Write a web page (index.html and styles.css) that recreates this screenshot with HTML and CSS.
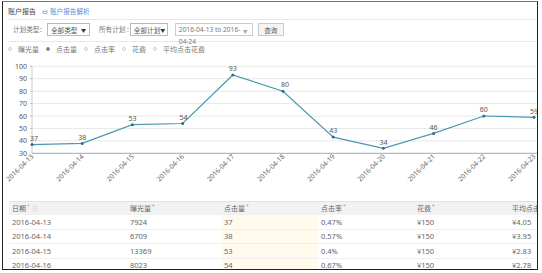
FILE: index.html
```html
<!DOCTYPE html>
<html lang="zh-CN">
<head>
    <meta charset="UTF-8">
    <title>账户报告</title>
    <link rel="stylesheet" href="styles.css">
</head>
<body>
    <div class="frame">
        <div class="title-bar">
            <span class="title">账户报告</span>
            <a class="help-link" href="#"><span class="help-icon">⇔</span>账户报告解析</a>
        </div>

        <div class="filters">
            <span class="filter-label label-type">计划类型：</span>
            <div class="select select-type">全部类型<span class="caret">▼</span></div>
            <span class="filter-label label-plan">所有计划 :</span>
            <div class="select select-plan">全部计划<span class="caret">▼</span></div>
            <div class="date-range">
                <span class="date-text">2016-04-13 to 2016-<br>04-24</span>
                <span class="caret light">▼</span>
            </div>
            <button class="query-btn">查询</button>
        </div>

        <div class="legend">
            <span class="legend-item"><i class="dot"></i>曝光量</span>
            <span class="legend-item"><i class="dot on"></i>点击量</span>
            <span class="legend-item"><i class="dot"></i>点击率</span>
            <span class="legend-item"><i class="dot"></i>花费</span>
            <span class="legend-item"><i class="dot"></i>平均点击花费</span>
        </div>

        <svg class="chart" width="535" height="140" viewBox="0 0 535 140">
            <g class="grid">
                <line x1="29" y1="10.3" x2="535" y2="10.3"/>
                <line x1="29" y1="22.7" x2="535" y2="22.7"/>
                <line x1="29" y1="35.2" x2="535" y2="35.2"/>
                <line x1="29" y1="47.6" x2="535" y2="47.6"/>
                <line x1="29" y1="60" x2="535" y2="60"/>
                <line x1="29" y1="72.4" x2="535" y2="72.4"/>
                <line x1="29" y1="84.9" x2="535" y2="84.9"/>
            </g>
            <line class="y-axis" x1="29" y1="10.3" x2="29" y2="97.3"/>
            <g class="ticks">
                <line x1="27" y1="10.3" x2="29" y2="10.3"/>
                <line x1="27" y1="22.7" x2="29" y2="22.7"/>
                <line x1="27" y1="35.2" x2="29" y2="35.2"/>
                <line x1="27" y1="47.6" x2="29" y2="47.6"/>
                <line x1="27" y1="60" x2="29" y2="60"/>
                <line x1="27" y1="72.4" x2="29" y2="72.4"/>
                <line x1="27" y1="84.9" x2="29" y2="84.9"/>
            </g>
            <line class="x-axis" x1="29" y1="97.3" x2="535" y2="97.3"/>

            <g class="y-labels">
                <text x="24" y="12.8">100</text>
                <text x="24" y="25.2">90</text>
                <text x="24" y="37.7">80</text>
                <text x="24" y="50.1">70</text>
                <text x="24" y="62.5">60</text>
                <text x="24" y="74.9">50</text>
                <text x="24" y="87.4">40</text>
                <text x="24" y="99.8">30</text>
            </g>

            <polyline class="series" points="29,88.6 79.2,87.4 129.4,68.7 179.6,67.5 229.8,19 280,35.2 330.2,81.1 380.4,92.3 430.6,77.4 480.8,60 531,61.3"/>
            <g class="points">
                <circle cx="29" cy="88.6" r="1.5"/>
                <circle cx="79.2" cy="87.4" r="1.5"/>
                <circle cx="129.4" cy="68.7" r="1.5"/>
                <circle cx="179.6" cy="67.5" r="1.5"/>
                <circle cx="229.8" cy="19" r="1.5"/>
                <circle cx="280" cy="35.2" r="1.5"/>
                <circle cx="330.2" cy="81.1" r="1.5"/>
                <circle cx="380.4" cy="92.3" r="1.5"/>
                <circle cx="430.6" cy="77.4" r="1.5"/>
                <circle cx="480.8" cy="60" r="1.5"/>
                <circle cx="531" cy="61.3" r="1.5"/>
            </g>
            <g class="values">
                <text x="31" y="84.8">37</text>
                <text x="79.2" y="83.6">38</text>
                <text x="129.4" y="64.9">53</text>
                <text x="180.6" y="63.7">54</text>
                <text x="229.8" y="15.2">93</text>
                <text x="282" y="31.4">80</text>
                <text x="330.2" y="77.3">43</text>
                <text x="380.4" y="88.5">34</text>
                <text x="430.6" y="73.6">46</text>
                <text x="480.8" y="56.2">60</text>
                <text x="531" y="57.5">59</text>
            </g>
            <g class="x-labels">
                <text transform="translate(31 101) rotate(-45)">2016-04-13</text>
                <text transform="translate(81.2 101) rotate(-45)">2016-04-14</text>
                <text transform="translate(131.4 101) rotate(-45)">2016-04-15</text>
                <text transform="translate(181.6 101) rotate(-45)">2016-04-16</text>
                <text transform="translate(231.8 101) rotate(-45)">2016-04-17</text>
                <text transform="translate(282 101) rotate(-45)">2016-04-18</text>
                <text transform="translate(332.2 101) rotate(-45)">2016-04-19</text>
                <text transform="translate(382.4 101) rotate(-45)">2016-04-20</text>
                <text transform="translate(432.6 101) rotate(-45)">2016-04-21</text>
                <text transform="translate(482.8 101) rotate(-45)">2016-04-22</text>
                <text transform="translate(533 101) rotate(-45)">2016-04-23</text>
            </g>
        </svg>

        <table class="report">
            <colgroup>
                <col style="width:118px">
                <col style="width:94px">
                <col style="width:97px">
                <col style="width:96px">
                <col style="width:95px">
                <col style="width:100px">
            </colgroup>
            <thead>
                <tr>
                    <th>日期<sup class="sort active">*</sup><span class="info">ⓘ</span></th>
                    <th>曝光量<sup class="sort">*</sup></th>
                    <th>点击量<sup class="sort">*</sup></th>
                    <th>点击率<sup class="sort">*</sup></th>
                    <th>花费<sup class="sort">*</sup></th>
                    <th>平均点击花费</th>
                </tr>
            </thead>
            <tbody>
                <tr><td>2016-04-13</td><td>7924</td><td class="hl">37</td><td>0.47%</td><td>¥150</td><td>¥4.05</td></tr>
                <tr><td>2016-04-14</td><td>6709</td><td class="hl">38</td><td>0.57%</td><td>¥150</td><td>¥3.95</td></tr>
                <tr><td>2016-04-15</td><td>13369</td><td class="hl">53</td><td>0.4%</td><td>¥150</td><td>¥2.83</td></tr>
                <tr><td>2016-04-16</td><td>8023</td><td class="hl">54</td><td>0.67%</td><td>¥150</td><td>¥2.78</td></tr>
            </tbody>
        </table>
    </div>
</body>
</html>
```

FILE: styles.css
```css
* {
    margin: 0;
    padding: 0;
    box-sizing: border-box;
}

body {
    background: #fff;
    font-family: "Noto Sans", "Noto Sans CJK SC", sans-serif;
    font-size: 7px;
    color: #666;
}

.frame {
    margin: 1px 4px 0 2px;
    height: 269px;
    border: 1px solid #222;
    border-top-color: #777;
    overflow: hidden;
}

.title-bar {
    display: flex;
    align-items: center;
    gap: 6px;
    height: 18px;
    margin-left: 5px;
    border-bottom: 1px solid #e8e8e8;
}

.title {
    color: #444;
}

.help-link {
    color: #5b8fd6;
    text-decoration: none;
    font-size: 6.6px;
}

.help-icon {
    font-size: 6px;
    margin-right: 2px;
}

.filters {
    display: flex;
    align-items: flex-start;
    height: 22px;
    margin-left: 5px;
    padding: 3px 0 0 5px;
    border-bottom: 1px solid #e8e8e8;
    white-space: nowrap;
    font-size: 6.6px;
}

.filter-label {
    line-height: 13px;
    color: #777;
}

.label-type {
    width: 34px;
}

.label-plan {
    margin: 0 1px 0 9px;
}

.select {
    display: flex;
    align-items: center;
    justify-content: space-between;
    height: 13px;
    padding: 0 3px;
    border: 1px solid #bbb;
    color: #555;
}

.select-type {
    width: 43px;
}

.select-plan {
    width: 38px;
    padding-right: 2px;
}

.caret {
    font-size: 5px;
    color: #333;
}

.caret.light {
    color: #aaa;
    margin-top: 3px;
}

.date-range {
    display: flex;
    justify-content: space-between;
    width: 78px;
    height: 13px;
    margin-left: 7px;
    padding: 0 4px 0 3px;
    border: 1px solid #ccc;
}

.date-text {
    line-height: 11.5px;
    color: #777;
}

.query-btn {
    height: 13px;
    width: 26px;
    margin-left: 5px;
    border: 1px solid #ccc;
    background: #f5f5f5;
    font: inherit;
    color: #555;
}

.legend {
    display: flex;
    align-items: center;
    gap: 7px;
    height: 14px;
    margin-left: 5px;
    color: #777;
}

.legend-item {
    display: flex;
    align-items: center;
    gap: 6px;
}

.dot {
    width: 4px;
    height: 4px;
    border-radius: 50%;
    border: 1px solid #ccc;
}

.dot.on {
    background: #888;
    border-color: #888;
}

.chart {
    display: block;
}

.grid line {
    stroke: #e8e8e8;
    stroke-width: 1;
}

.y-axis {
    stroke: #ccc;
    stroke-width: 1;
}

.ticks line {
    stroke: #bbb;
}

.x-axis {
    stroke: #8eaecb;
    stroke-width: 1;
}

.y-labels text {
    font-size: 7px;
    fill: #555;
    text-anchor: end;
}

.series {
    fill: none;
    stroke: #4a98b2;
    stroke-width: 1.2;
}

.points circle {
    fill: #2f6f86;
}

.values text {
    font-size: 7px;
    fill: #555;
    text-anchor: middle;
}

.x-labels text {
    font-size: 6.8px;
    fill: #666;
    text-anchor: end;
}

.report {
    margin: 5px 0 0 6px;
    width: 600px;
    table-layout: fixed;
    border-collapse: collapse;
    font-size: 7.5px;
    color: #666;
}

.report th {
    height: 13px;
    padding-left: 3px;
    text-align: left;
    font-weight: normal;
    font-size: 7px;
    color: #666;
    background: #f2f2f2;
    border-top: 1px solid #e2e2e2;
}

.report td {
    height: 14.5px;
    padding-left: 3px;
    border-bottom: 1px solid #f0f0f0;
}

.report td.hl {
    background: #fffaec;
}

.sort {
    font-size: 5px;
    margin-left: 1px;
    color: #999;
}

.sort.active {
    color: #f0a040;
}

.info {
    font-size: 6px;
    margin-left: 2px;
    color: #aaa;
}
```
